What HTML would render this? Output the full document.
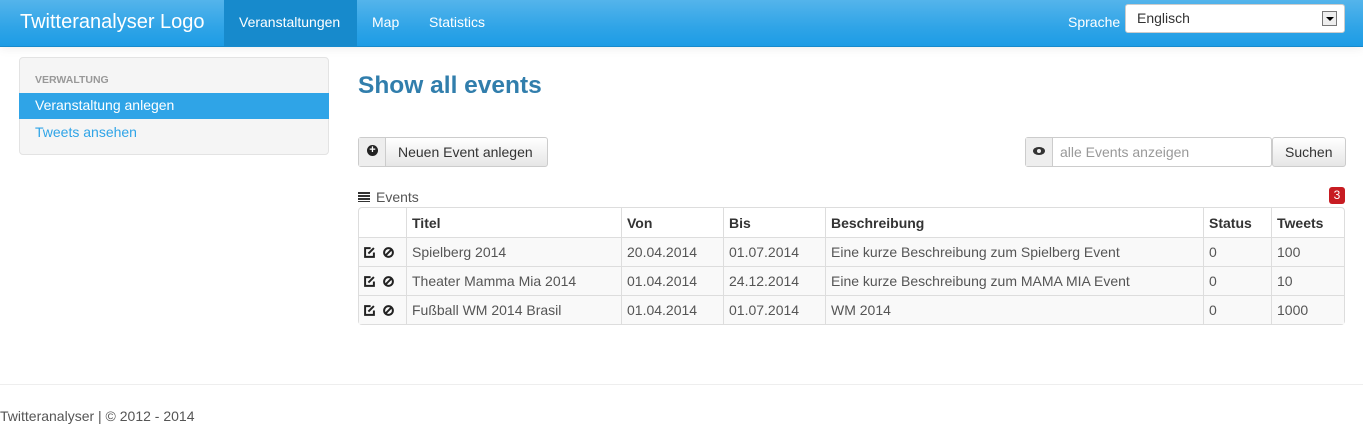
<!DOCTYPE html>
<html><head><meta charset="utf-8"><style>
*{box-sizing:border-box;margin:0;padding:0}
body{width:1363px;height:445px;font-family:"Liberation Sans",sans-serif;font-size:14px;color:#555;background:#fff;position:relative;overflow:hidden}
.abs{position:absolute}
.nav{left:0;top:0;width:1363px;height:47px;background:linear-gradient(#54b4eb,#2fa4e7 60%,#1d9ce5);border-bottom:1px solid #178acc;box-shadow:0 1px 10px rgba(0,0,0,.08)}
.nav span{position:absolute;color:#fff}
.side{left:19px;top:57px;width:310px;height:98px;background:#f5f5f5;border:1px solid #e3e3e3;border-radius:4px}
table{border-collapse:separate;border-spacing:0;position:absolute;left:358px;top:207px;width:987px;border:1px solid #ddd;border-radius:4px;font-size:14px;table-layout:fixed}
td,th{height:29px;padding:0 5px;border-left:1px solid #ddd;border-top:1px solid #ddd;text-align:left;color:#555}
th{border-top:none;color:#333;font-weight:bold}
tr td:first-child,tr th:first-child{border-left:none}
tbody tr{background:#f9f9f9}
.ic{display:inline-block;width:11px;height:11px;vertical-align:-1px}
</style></head><body>
<div class="abs nav">
 <span style="left:20px;top:11px;font-size:20px">Twitteranalyser Logo</span>
 <div class="abs" style="left:224px;top:0;width:133px;height:47px;background:#178acc"></div>
 <span style="left:239px;top:14px;font-size:14px">Veranstaltungen</span>
 <span style="left:372px;top:14px">Map</span>
 <span style="left:429px;top:14px">Statistics</span>
 <span style="left:1068px;top:14px">Sprache</span>
 <div class="abs" style="left:1125px;top:4px;width:220px;height:29px;background:#fff;border:1px solid #ccc;border-radius:3px"><span style="left:11px;top:5px;color:#333;font-size:14px">Englisch</span><div class="abs" style="left:196px;top:6px;width:15px;height:15px;border:1px solid #777;background:#eee"><div class="abs" style="left:3px;top:5px;border-left:4px solid transparent;border-right:4px solid transparent;border-top:4px solid #000"></div></div></div>
</div>
<div class="abs side">
 <div class="abs" style="left:15px;top:16px;font-size:10.5px;font-weight:bold;color:#999">VERWALTUNG</div>
 <div class="abs" style="left:-1px;top:35px;width:310px;height:26px;background:#2fa4e7;color:#fff;padding:4px 16px">Veranstaltung anlegen</div>
 <div class="abs" style="left:15px;top:66px;color:#2fa4e7">Tweets ansehen</div>
</div>
<div class="abs" style="left:358px;top:72px;font-size:24.5px;font-weight:bold;color:#317eac">Show all events</div>
<div class="abs" style="left:358px;top:137px;width:190px;height:30px;border:1px solid #ccc;border-radius:3px;background:linear-gradient(#fff,#e6e6e6)">
 <div class="abs" style="left:0;top:0;width:27px;height:28px;background:#eee;border-right:1px solid #ccc"><div class="abs" style="left:8px;top:7px;width:11px;height:11px;border-radius:50%;background:#222;color:#fff;font-size:11px;line-height:10px;text-align:center;font-weight:bold">+</div></div>
 <span class="abs" style="left:39px;top:6px;color:#333">Neuen Event anlegen</span>
</div>
<div class="abs" style="left:1025px;top:137px;width:247px;height:30px;border:1px solid #ccc;border-radius:3px;background:#fff">
 <div class="abs" style="left:0;top:0;width:27px;height:28px;background:#eee;border-right:1px solid #ccc"><div class="abs" style="left:7px;top:9px;width:12px;height:8px;border-radius:50%;background:#333"><div class="abs" style="left:4px;top:2px;width:4px;height:4px;border-radius:50%;background:#eee"></div></div></div>
 <span class="abs" style="left:34px;top:6px;color:#999">alle Events anzeigen</span>
</div>
<div class="abs" style="left:1272px;top:137px;width:74px;height:30px;border:1px solid #ccc;border-radius:3px;background:linear-gradient(#fff,#e6e6e6);color:#333;padding:6px 12px">Suchen</div>
<div class="abs" style="left:358px;top:192px;width:12px;height:10px;background:repeating-linear-gradient(#333 0 2px,#fff 2px 3px)"></div>
<div class="abs" style="left:376px;top:189px;color:#555">Events</div>
<div class="abs" style="left:1329px;top:187px;width:16px;height:17px;background:#c71c22;border-radius:3px;color:#fff;font-size:12px;text-align:center;line-height:17px">3</div>
<table>
<colgroup><col style="width:47px"><col style="width:215px"><col style="width:102px"><col style="width:102px"><col style="width:378px"><col style="width:68px"><col></colgroup>
<thead><tr><th></th><th>Titel</th><th>Von</th><th>Bis</th><th>Beschreibung</th><th>Status</th><th>Tweets</th></tr></thead>
<tbody>
<tr><td><svg class="ic" viewBox="0 0 10 10"><path d="M6 1H1v8h8V5" fill="none" stroke="#222" stroke-width="1.8"/><path d="M4 6l5-5" stroke="#222" stroke-width="1.8"/></svg>&nbsp;&nbsp;<svg class="ic" viewBox="0 0 10 10"><circle cx="5" cy="5" r="4" fill="none" stroke="#222" stroke-width="1.8"/><path d="M2 8L8 2" stroke="#222" stroke-width="1.8"/></svg></td><td>Spielberg 2014</td><td>20.04.2014</td><td>01.07.2014</td><td>Eine kurze Beschreibung zum Spielberg Event</td><td>0</td><td>100</td></tr>
<tr><td><svg class="ic" viewBox="0 0 10 10"><path d="M6 1H1v8h8V5" fill="none" stroke="#222" stroke-width="1.8"/><path d="M4 6l5-5" stroke="#222" stroke-width="1.8"/></svg>&nbsp;&nbsp;<svg class="ic" viewBox="0 0 10 10"><circle cx="5" cy="5" r="4" fill="none" stroke="#222" stroke-width="1.8"/><path d="M2 8L8 2" stroke="#222" stroke-width="1.8"/></svg></td><td>Theater Mamma Mia 2014</td><td>01.04.2014</td><td>24.12.2014</td><td>Eine kurze Beschreibung zum MAMA MIA Event</td><td>0</td><td>10</td></tr>
<tr><td><svg class="ic" viewBox="0 0 10 10"><path d="M6 1H1v8h8V5" fill="none" stroke="#222" stroke-width="1.8"/><path d="M4 6l5-5" stroke="#222" stroke-width="1.8"/></svg>&nbsp;&nbsp;<svg class="ic" viewBox="0 0 10 10"><circle cx="5" cy="5" r="4" fill="none" stroke="#222" stroke-width="1.8"/><path d="M2 8L8 2" stroke="#222" stroke-width="1.8"/></svg></td><td>Fußball WM 2014 Brasil</td><td>01.04.2014</td><td>01.07.2014</td><td>WM 2014</td><td>0</td><td>1000</td></tr>
</tbody></table>
<div class="abs" style="left:0;top:384px;width:1363px;border-top:1px solid #eee"></div>
<div class="abs" style="left:0;top:408px;color:#555">Twitteranalyser | © 2012 - 2014</div>
</body></html>
